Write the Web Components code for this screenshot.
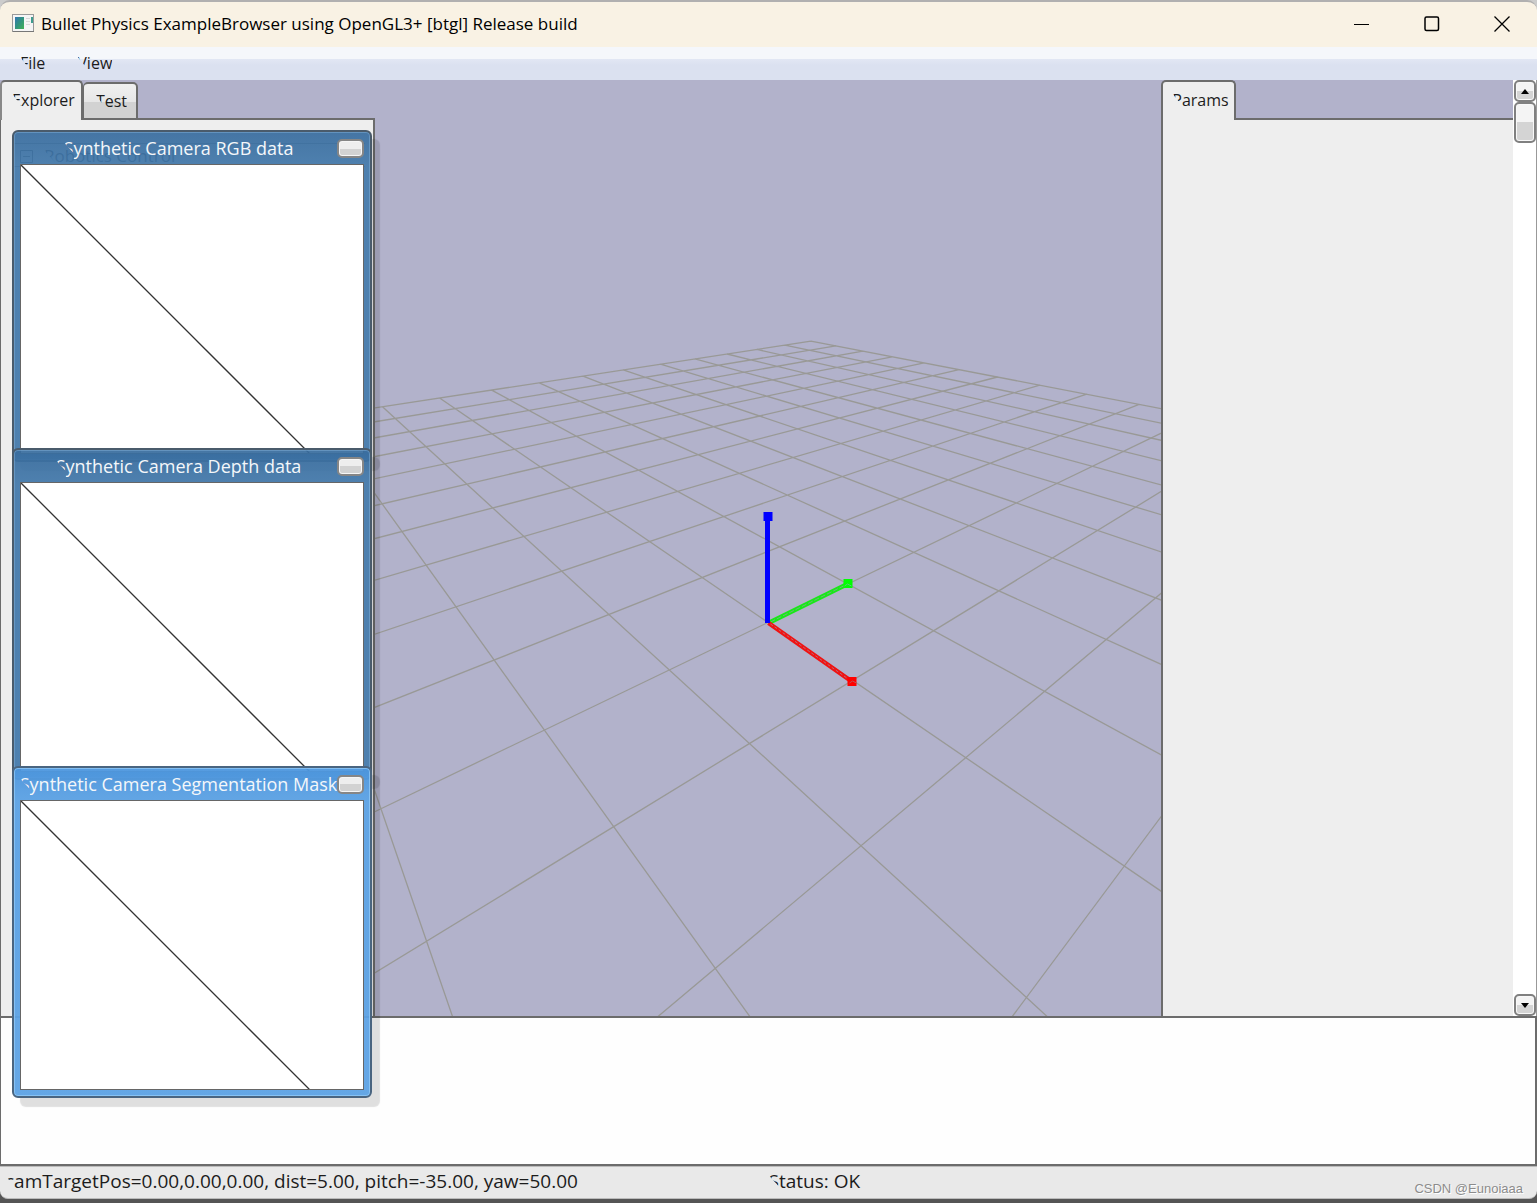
<!DOCTYPE html>
<html lang="en">
<head>
<meta charset="utf-8">
<title>Bullet Physics ExampleBrowser</title>
<style>
  html, body { margin: 0; height: 100%; }
  body { background: #555; font-family: "Open Sans", "Noto Sans", sans-serif; font-size: 17px; line-height: 24px; color: #1c1c1c; overflow: hidden; }
</style>
</head>
<body>
<example-browser>
  <title-bar slot="title">Bullet Physics ExampleBrowser using OpenGL3+ [btgl] Release build</title-bar>
  <menu-bar slot="menu">
    <button type="button"><gl-label style="--w:8px">File</gl-label></button>
    <button type="button"><gl-label style="--w:9px">View</gl-label></button>
  </menu-bar>
  <explorer-panel slot="left"></explorer-panel>
  <gl-viewport slot="view"></gl-viewport>
  <params-panel slot="right"></params-panel>
  <camera-window slot="windows"><gl-label style="--w:10px">Synthetic Camera RGB data</gl-label></camera-window>
  <camera-window slot="windows"><gl-label style="--w:10px">Synthetic Camera Depth data</gl-label></camera-window>
  <camera-window slot="windows" active><gl-label style="--w:10px">Synthetic Camera Segmentation Mask</gl-label></camera-window>
  <status-bar slot="status">
    <gl-label style="--w:9px">camTargetPos=0.00,0.00,0.00, dist=5.00, pitch=-35.00, yaw=50.00</gl-label>
    <gl-label style="--w:10px">Status: OK</gl-label>
    <span slot="credit">CSDN @Eunoiaaa</span>
  </status-bar>
</example-browser>

<script>
const define = (name, html, setup) => {
  const template = document.createElement('template');
  template.innerHTML = html;
  customElements.define(name, class extends HTMLElement {
    constructor() {
      super();
      const root = this.attachShadow({ mode: 'open' });
      root.append(template.content.cloneNode(true));
      if (setup) setup(root, this);
    }
  });
};

// A text run whose first glyph is drawn with only its upper-right triangle.
define('gl-label', `
<style>
  :host { display: inline-block; white-space: nowrap; line-height: 24px;
    clip-path: polygon(0 0, 100% 0, 100% 100%, var(--w) 100%, var(--w) 17px, 0 6px); }
</style><slot></slot>`);

define('title-bar', `
<style>
  :host { display: flex; align-items: center; box-sizing: border-box; height: 47px; padding: 0 0 2px 12px; background: #f9f2e4; border-top: 2px solid #b1b0b0;
    border-radius: 10px 10px 0 0; color: #000; white-space: nowrap; }
  .logo { flex: none; margin-right: 6px; }
  h1 { flex: 1; margin: 0; font: 400 17px/24px "Open Sans", sans-serif; }
  button { width: 70px; height: 43px; padding: 0; border: 0; background: none; display: grid; place-items: center; }
  svg { display: block; fill: none; stroke: #000; }
</style>
<svg class="logo" width="23" height="19" viewBox="0 0 23 19" aria-hidden="true">
  <defs><linearGradient id="g" x1="0" y1="0" x2="1" y2="1"><stop stop-color="#3476b4"/><stop offset=".5" stop-color="#31947f"/><stop offset="1" stop-color="#42b155"/></linearGradient></defs>
  <rect x=".5" y=".5" width="21" height="17" fill="#f5f5f5" stroke="#9a9a9a"/>
  <path d="M1 17.500h21" stroke="#777"/>
  <rect x="3" y="3" width="9" height="12" fill="url(#g)" stroke="none"/>
  <path d="M14 4.500h4M14 7.500h4M14 10.500h4" stroke="#d8d8d8"/>
  <rect x="19" y="3" width="2" height="6" fill="#3f9c8e" stroke="none"/>
</svg>
<h1><slot></slot></h1>
<button type="button" aria-label="Minimize"><svg width="16" height="16"><path d="M0 8.500h15"/></svg></button>
<button type="button" aria-label="Maximize"><svg width="16" height="16" stroke-width="1.500"><rect x="1" y="1" width="13.500" height="13.500" rx="1.500"/></svg></button>
<button type="button" aria-label="Close"><svg width="16" height="16" stroke-width="1.300"><path d="M.5.5l15 15M15.500.5l-15 15"/></svg></button>`);

define('menu-bar', `
<style>
  :host { display: flex; align-items: center; gap: 32px; box-sizing: border-box; height: 33px; padding: 0 0 2px 20px; font-size: 16px;
    background: linear-gradient(#f5f7fb 0 12px, #e2e7f4 12px, #dbe1f0 18px); }
  ::slotted(button) { padding: 0; border: 0; background: none; font: inherit; color: inherit; }
</style><slot></slot>`);

const tabStyle = `
  .tabs { display: flex; align-items: flex-end; height: 40px; font-size: 16px; }
  .tab { box-sizing: border-box; height: 40px; padding: 0 0 3px 4px; border: 2px solid #6c6c6c; border-bottom: 0; border-radius: 5px 5px 0 0;
    background: #eee; font: inherit; color: inherit; text-align: center; }
  .rule { flex: 1; align-self: stretch; border-bottom: 2px solid #6c6c6c; box-sizing: border-box; }
`;

define('explorer-panel', `
<style>${tabStyle}
  :host { display: flex; flex-direction: column; width: 375px; }
  .explorer { width: 83px; border-left-color: #888; }
  .test { width: 55px; height: 38px; padding: 0 0 0 3px; border-left: 1px solid #6c6c6c; border-bottom: 2px solid #6c6c6c; background: linear-gradient(#f0f0f0, #e6e6e6 18px, #d2d2d2 18px); }
  .body { flex: 1; box-sizing: border-box; border: solid #6c6c6c; border-width: 0 2px 0 1px; background: #eee; padding: 23px 8px 0 12px; }
  .row { display: flex; align-items: center; gap: 11px; height: 20px; border: solid #888; border-width: 1px 0; padding-top: 2px; padding-left: 7px; color: #222; }
  .row svg { flex: none; }
</style>
<div class="tabs">
  <button type="button" class="tab explorer"><gl-label style="--w:8px">Explorer</gl-label></button>
  <button type="button" class="tab test"><gl-label style="--w:8px">Test</gl-label></button>
  <div class="rule"></div>
</div>
<div class="body"><div class="row">
  <svg width="13" height="13" fill="none" stroke="#444"><path d="M.5.5h12v12H.5zM3 6.500h7"/></svg>
  <gl-label style="--w:10px">Robotics Control</gl-label>
</div></div>`);

define('params-panel', `
<style>${tabStyle}
  :host { display: flex; width: 375px; }
  .panel { flex: 1; display: flex; flex-direction: column; }
  .tab { width: 75px; }
  .body { flex: 1; background: #eee; border-left: 2px solid #6c6c6c; }
  .bar { display: flex; flex-direction: column; align-items: flex-end; width: 23px; background: #fff; }
  .bar button { box-sizing: border-box; height: 22px; width: 22px; padding: 0; border: 2px solid #808080; border-radius: 5px;
    background: linear-gradient(#f4f4f4 50%, #d4d4d4 50%); box-shadow: inset 0 0 0 1px #f8f8f8; display: grid; place-items: center; }
  .bar .thumb { height: 41px; margin-bottom: auto; }
  svg { display: block; }
</style>
<div class="panel">
  <div class="tabs"><button type="button" class="tab"><gl-label style="--w:9px">Params</gl-label></button><div class="rule"></div></div>
  <div class="body"></div>
</div>
<div class="bar">
  <button type="button" aria-label="Scroll up"><svg width="8" height="5"><path d="M0 5L4 0l4 5z"/></svg></button>
  <button type="button" class="thumb" aria-label="Scroll thumb"></button>
  <button type="button" aria-label="Scroll down"><svg width="8" height="5"><path d="M0 0h8L4 5z"/></svg></button>
</div>`);

define('gl-viewport', `
<style>
  :host { display: block; flex: 1; min-width: 0; }
  svg { display: block; width: 100%; height: 100%; }
</style>
<svg viewBox="374 80 787 936" preserveAspectRatio="xMidYMid slice" role="img" aria-label="World grid and axes">
  <path id="grid" fill="none" stroke="#999996" stroke-width="1.300"/>
  <path d="M768 623L847 584" stroke="#18e818" stroke-width="4.500"/>
  <path d="M770 622L847 584" stroke="#6bb878" stroke-width="1" stroke-dasharray="5 2"/>
  <rect x="843" y="579" width="9" height="9" fill="#0f0"/>
  <path d="M844 586l3-2 4 2" fill="none" stroke="#5c7"/>
  <path d="M768 623L852 682" stroke="#f01212" stroke-width="4.500"/>
  <path d="M770 624L852 682" stroke="#b96a74" stroke-width="1" stroke-dasharray="3 2"/>
  <rect x="847" y="677" width="9" height="9" fill="#f00"/>
  <path d="M849 683l3-2 4 2" fill="none" stroke="#b55"/>
  <path d="M767 623V516" stroke="#00f" stroke-width="5"/>
  <rect x="763" y="512" width="9" height="9" fill="#00f"/>
</svg>`, root => {
  // Orbit camera: distance 5, pitch -35°, yaw 50°, aimed at the origin.
  const rad = Math.PI / 180, pitch = 35 * rad, yaw = 50 * rad, dist = 5, focal = 576, cx = 767.5, cy = 622.5;
  const view = (x, y) => {
    const right = x * Math.cos(yaw) + y * Math.sin(yaw);
    const ahead = y * Math.cos(yaw) - x * Math.sin(yaw);
    return [right, ahead * Math.sin(pitch), dist + ahead * Math.cos(pitch)];
  };
  const near = 0.4;
  const line = (a, b) => {
    if (a[2] < near && b[2] < near) return '';
    const cut = (p, q) => {
      if (p[2] >= near) return p;
      const t = (near - p[2]) / (q[2] - p[2]);
      return p.map((v, i) => v + t * (q[i] - v));
    };
    const to = p => (cx + focal * p[0] / p[2]).toFixed(1) + ' ' + (cy - focal * p[1] / p[2]).toFixed(1);
    return 'M' + to(cut(a, b)) + 'L' + to(cut(b, a));
  };
  let d = '';
  for (let i = -10; i <= 10; i++) d += line(view(i, -10), view(i, 10)) + line(view(-10, i), view(10, i));
  root.getElementById('grid').setAttribute('d', d);
});

define('camera-window', `
<style>
  :host { display: flex; flex-direction: column; box-sizing: border-box; width: 360px; height: 332px; margin-bottom: -14px; padding: 0 6px 6px;
    border: 2px solid #4a5b6b; border-radius: 6px; background: linear-gradient(rgba(56,108,158,.93), rgba(66,120,170,.93) 34px);
    box-shadow: inset 0 0 0 1px rgba(130,175,215,.5), 8px 9px 1px rgba(0,0,0,.12); color: #f4f7fa; font-size: 18px; }
  :host([active]) { border-color: #4a6580; background: linear-gradient(rgba(76,150,222,.95), rgba(92,162,228,.95) 34px); box-shadow: inset 0 0 0 1px rgba(150,205,250,.7), 8px 9px 1px rgba(0,0,0,.12); }
  header { display: flex; align-items: center; height: 32px; }
  .name { flex: 1; display: flex; justify-content: center; min-width: 0; }
  button { box-sizing: border-box; width: 27px; height: 19px; padding: 0; border: 2px solid #868686; border-radius: 5px;
    background: linear-gradient(#eee 50%, #d2d2d2 50%); box-shadow: inset 0 0 0 1px #f6f6f6; }
  .canvas { flex: 1; min-height: 0; border: 1px solid #666; background: #fff; overflow: hidden; }
  svg { display: block; }
</style>
<header><div class="name"><slot></slot></div><button type="button" aria-label="Close window"></button></header>
<div class="canvas"><svg width="290" height="290"><path d="M0 0L290 290" stroke="#333" stroke-width="1.300"/></svg></div>`);

define('status-bar', `
<style>
  :host { display: grid; grid-template-columns: 1fr 1fr; box-sizing: border-box; height: 33px; padding: 2px 5px 0; background: #e9e9e9;
    border: solid #bbb; border-width: 1px 0; border-radius: 0 0 8px 8px; position: relative; font-size: 19px; }
  ::slotted([slot=credit]) { position: absolute; right: 14px; bottom: 1px; font: 13px/16px "Liberation Sans", sans-serif; color: #8c8c8c; text-shadow: 1px 1px #fff; }
</style>
<slot></slot><slot name="credit"></slot>`);

define('example-browser', `
<style>
  :host { display: flex; flex-direction: column; box-sizing: border-box; height: 100vh; padding-bottom: 4px; background: linear-gradient(#ccc 50px, #999 50px calc(100% - 30px), #555 calc(100% - 30px)); }
  .work { position: relative; flex: 1; min-height: 0; display: flex; background: #b2b2cb; border-right: 1px solid #999; }
  .windows { position: absolute; left: 12px; top: 50px; display: flex; flex-direction: column; }
  .log { box-sizing: border-box; height: 150px; border: 2px solid #6c6c6c; border-left-width: 1px; background: #fefefe; }
</style>
<slot name="title"></slot>
<slot name="menu"></slot>
<div class="work">
  <slot name="left"></slot><slot name="view"></slot><slot name="right"></slot>
  <div class="windows"><slot name="windows"></slot></div>
</div>
<div class="log"></div>
<slot name="status"></slot>`);
</script>
</body>
</html>
